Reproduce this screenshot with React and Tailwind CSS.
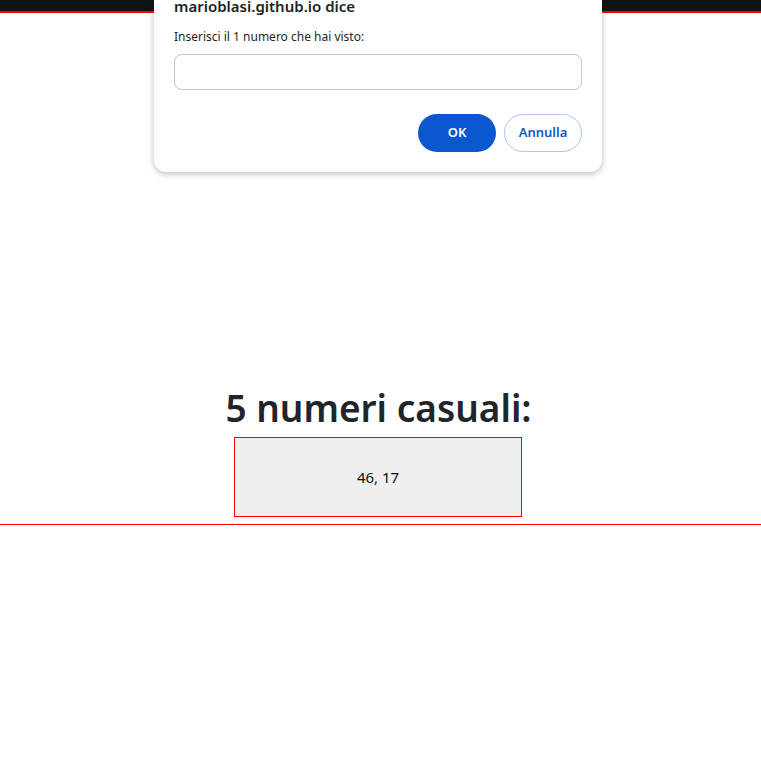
import React from 'react';

export default function App() {
  return (
    <div className="relative min-h-[773px] bg-white font-['Noto_Sans',sans-serif] text-[#222]">
      {/* Top strip */}
      <div className="h-[13px] bg-[#111214] border-b-2 border-[#ff0000]" />

      {/* Page */}
      <div className="flex flex-col items-center pt-[373px]">
        <h1 className="text-[37px] font-semibold leading-[44px] text-[#212529] pr-[4px]">5 numeri casuali:</h1>
        <div className="mt-[7px] w-[288px] h-[80px] bg-[#efefef] border border-[#ff0000] flex items-center justify-center text-[15px] text-[#111] mr-[5px]">
          46, 17
        </div>
      </div>
      <div className="mt-[7px] border-t border-[#ff0000]" />

      {/* Browser prompt */}
      <div className="absolute left-[154px] top-[-14px] w-[448px] bg-white rounded-xl shadow-[0_2px_6px_rgba(0,0,0,0.25)] px-[20px] pb-[20px] pt-[10px]">
        <div className="text-[15px] font-semibold text-[#1f1f1f] leading-[20px]">marioblasi.github.io dice</div>
        <div className="mt-[13px] text-[12px] text-[#1f1f1f] leading-[16px]">Inserisci il 1 numero che hai visto:</div>
        <div className="mt-[9px] h-[36px] rounded-lg border border-[#c4c7c5] bg-white" />
        <div className="mt-[24px] flex justify-end gap-[8px]">
          <button className="w-[78px] h-[38px] rounded-full bg-[#0b57d0] text-white text-[13px] font-semibold">OK</button>
          <button className="w-[78px] h-[38px] rounded-full border border-[#a8c7fa] bg-white text-[#0b57d0] text-[13px] font-semibold">Annulla</button>
        </div>
      </div>
    </div>
  );
}
